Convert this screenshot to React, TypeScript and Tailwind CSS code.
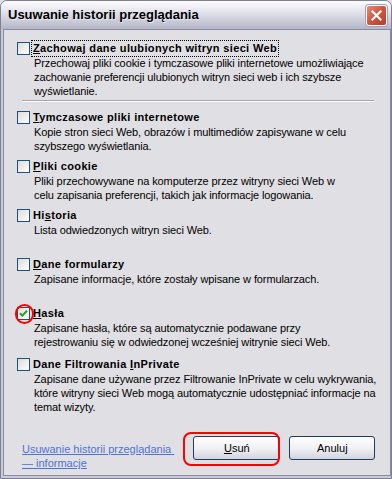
import React from "react";

// XP silver dialog: "Usuwanie historii przeglądania"

type ItemProps = {
  title: React.ReactNode;
  lines: string[];
  checked?: boolean;
  focused?: boolean;
  slot: string;
};

function CheckBox({ checked }: { checked?: boolean }) {
  return (
    <div className="w-[13px] h-[13px] shrink-0 border border-[#1c5180] bg-gradient-to-br from-[#dcdcd7] to-white flex items-center justify-center">
      {checked && (
        <svg width="9" height="9" viewBox="0 0 9 9">
          <path d="M1 4.2 L3.3 6.6 L8 1.8" stroke="#21a121" strokeWidth="2" fill="none" />
        </svg>
      )}
    </div>
  );
}

function Item({ title, lines, checked, focused, slot }: ItemProps) {
  return (
    <div className={`flex flex-col ${slot}`}>
      <div className="flex items-center h-[13px]">
        <CheckBox checked={checked} />
        <div
          className={`ml-[1px] px-[1px] h-[17px] flex items-center font-bold text-[11px] tracking-[0.35px] text-black border border-dotted ${
            focused ? "border-black" : "border-transparent"
          }`}
        >
          <span className="whitespace-nowrap">{title}</span>
        </div>
      </div>
      <div className="pl-[17px] mt-[1px] text-[11px] leading-[14px] tracking-[-0.1px] text-black whitespace-nowrap">
        {lines.map((l, i) => (
          <div key={i}>{l}</div>
        ))}
      </div>
    </div>
  );
}

export default function App() {
  return (
    <div className="w-[392px] h-[479px] bg-[#e0dfe3] font-['Tahoma','Liberation_Sans',sans-serif] text-[11px] overflow-hidden">
      <div className="w-full h-full flex flex-col rounded-t-[7px] border border-[#7f8094] bg-[#c9cad8]">
        {/* Title bar */}
        <div className="h-[28px] shrink-0 flex items-center justify-between pl-[7px] pr-[4px] rounded-t-[6px] bg-gradient-to-b from-[#fdfdfe] via-[#dcdce6] to-[#b4b5c8]">
          <span className="font-['Liberation_Sans',sans-serif] font-bold text-[13px] text-black [text-shadow:1px_1px_0_#e8e8ee]">
            Usuwanie historii przeglądania
          </span>
          <div className="w-[21px] h-[21px] rounded-[3px] border border-white bg-gradient-to-br from-[#e88a72] via-[#d2543b] to-[#b63a26] flex items-center justify-center shadow-[0_0_0_1px_#a3a4b6]">
            <svg width="11" height="11" viewBox="0 0 11 11">
              <path d="M1.5 1.5 L9.5 9.5 M9.5 1.5 L1.5 9.5" stroke="white" strokeWidth="2.2" strokeLinecap="square" />
            </svg>
          </div>
        </div>

        {/* Frame */}
        <div className="flex-1 flex px-[2px] pb-[2px]">
          <div className="relative flex-1 flex flex-col border border-[#8b8c9f] bg-[#e0dfe3] pl-[13px] pr-[14px] pt-[12px]">
            <Item
              slot="h-[58px]"
              focused
              title={
                <>
                  <u>Z</u>achowaj dane ulubionych witryn sieci Web
                </>
              }
              lines={[
                "Przechowaj pliki cookie i tymczasowe pliki internetowe umożliwiające",
                "zachowanie preferencji ulubionych witryn sieci web i ich szybsze",
                "wyświetlanie.",
              ]}
            />
            <div className="ml-[5px] mr-[2px] h-[2px] border-t border-[#a7a6aa] border-b border-b-white" />
            <div className="h-[9px]" />
            <Item
              slot="h-[49px]"
              title={
                <>
                  <u>T</u>ymczasowe pliki internetowe
                </>
              }
              lines={["Kopie stron sieci Web, obrazów i multimediów zapisywane w celu", "szybszego wyświetlania."]}
            />
            <Item
              slot="h-[49px]"
              title={
                <>
                  <u>P</u>liki cookie
                </>
              }
              lines={[
                "Pliki przechowywane na komputerze przez witryny sieci Web w",
                "celu zapisania preferencji, takich jak informacje logowania.",
              ]}
            />
            <Item
              slot="h-[49px]"
              title={
                <>
                  Hi<u>s</u>toria
                </>
              }
              lines={["Lista odwiedzonych witryn sieci Web."]}
            />
            <Item
              slot="h-[49px]"
              title={
                <>
                  <u>D</u>ane formularzy
                </>
              }
              lines={["Zapisane informacje, które zostały wpisane w formularzach."]}
            />
            <Item
              slot="h-[51px]"
              checked
              title={
                <>
                  <u>H</u>asła
                </>
              }
              lines={[
                "Zapisane hasła, które są automatycznie podawane przy",
                "rejestrowaniu się w odwiedzonej wcześniej witrynie sieci Web.",
              ]}
            />
            <Item
              slot="h-[60px]"
              title={
                <>
                  Dane Filtrowania <u>I</u>nPrivate
                </>
              }
              lines={[
                "Zapisane dane używane przez Filtrowanie InPrivate w celu wykrywania,",
                "które witryny sieci Web mogą automatycznie udostępniać informacje na",
                "temat wizyty.",
              ]}
            />

            {/* Footer */}
            <div className="flex items-start justify-between pl-[5px] mt-[18px]">
              <a className="mt-[6px] text-[#4f72d6] underline leading-[14px] cursor-pointer">
                Usuwanie historii przeglądania&nbsp;
                <br />— informacje
              </a>
              <div className="flex gap-[9px] mr-[1px]">
                <button className="w-[87px] h-[24px] rounded-[3px] border border-[#1f3a66] bg-gradient-to-b from-white via-[#f1f1f5] to-[#d4d4de] text-black text-[11px]">
                  <u>U</u>suń
                </button>
                <button className="w-[86px] h-[24px] rounded-[3px] border border-[#1f3a66] bg-gradient-to-b from-white via-[#f1f1f5] to-[#d4d4de] text-black text-[11px]">
                  Anuluj
                </button>
              </div>
            </div>

            {/* red annotation marks */}
            <div className="absolute left-[11px] top-[274px] w-[19px] h-[20px] rounded-full border-2 border-[#ff0000]" />
            <div className="absolute left-[179px] top-[402px] w-[97px] h-[34px] rounded-[8px] border-2 border-[#ff0000]" />
          </div>
        </div>
      </div>
    </div>
  );
}
